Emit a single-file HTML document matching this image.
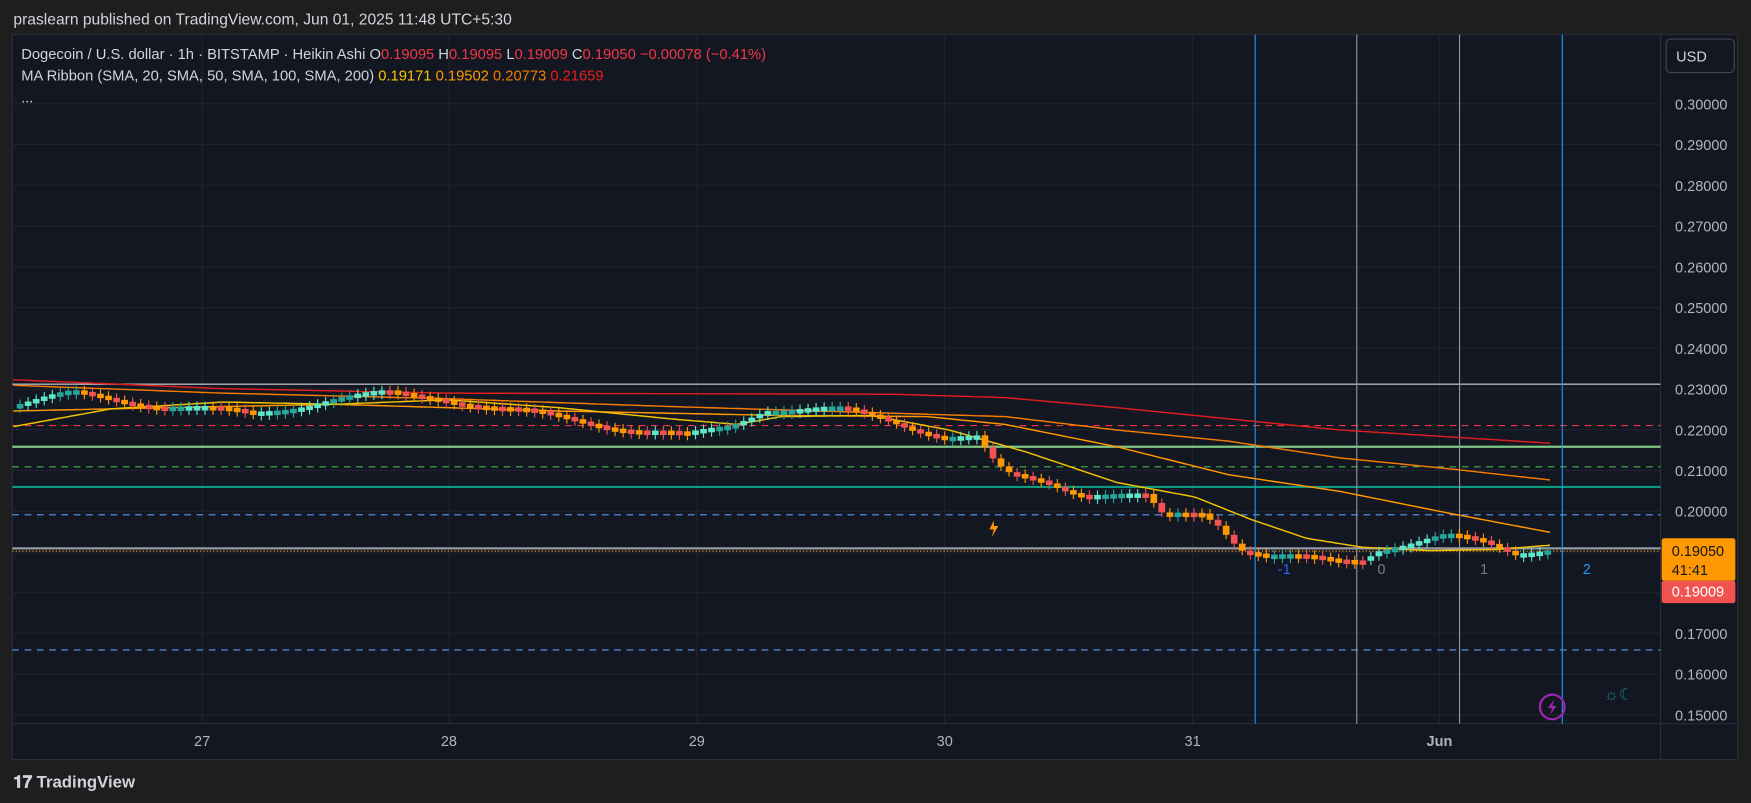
<!DOCTYPE html>
<html><head><meta charset="utf-8"><style>
html,body{margin:0;padding:0;background:#1e1e1e;width:1751px;height:803px;overflow:hidden}
svg{display:block}
text{font-family:"Liberation Sans","DejaVu Sans",sans-serif}
</style></head><body>
<svg id="s" width="1751" height="803" viewBox="0 0 1568 719" preserveAspectRatio="none" xmlns="http://www.w3.org/2000/svg">
<rect width="1568" height="719" fill="#1e1e1e"/>
<text x="12" y="22" fill="#d1d4dc" font-size="14">praslearn published on TradingView.com, Jun 01, 2025 11:48 UTC+5:30</text>
<rect x="11" y="31" width="1545" height="649" fill="#131722" stroke="#2a2e39"/>
<g id="grid" stroke="#1f2430" stroke-width="1"></g>
<line x1="1487" y1="31" x2="1487" y2="680" stroke="#2a2e39"/>
<line x1="11" y1="648" x2="1556" y2="648" stroke="#2a2e39"/>
<g id="hl"></g>
<g id="ma" fill="none" stroke-width="1.3"></g>
<g id="cd"></g>
<g id="ax" fill="#b2b5be" font-size="13"></g>
<text x="19" y="53" font-size="13.2" fill="#d1d4dc">Dogecoin / U.S. dollar · 1h · BITSTAMP · Heikin Ashi  O<tspan fill="#f23645">0.19095</tspan>  H<tspan fill="#f23645">0.19095</tspan>  L<tspan fill="#f23645">0.19009</tspan>  C<tspan fill="#f23645">0.19050  −0.00078 (−0.41%)</tspan></text>
<text x="19" y="72" font-size="13.2" fill="#d1d4dc">MA Ribbon (SMA, 20, SMA, 50, SMA, 100, SMA, 200)  <tspan fill="#f5c400">0.19171</tspan>  <tspan fill="#ff9800">0.19502</tspan>  <tspan fill="#f57c00">0.20773</tspan>  <tspan fill="#e91e1e">0.21659</tspan></text>
<text x="19" y="92" font-size="13" fill="#d1d4dc">...</text>
<rect x="1492" y="35" width="61" height="30" rx="4" fill="#131722" stroke="#434651"/>
<text x="1501" y="55" font-size="13" fill="#d1d4dc">USD</text>
<rect x="1488" y="482" width="66" height="38" rx="2" fill="#ff9800"/>
<text x="1497" y="498" font-size="13" fill="#131722">0.19050</text>
<text x="1497" y="515" font-size="13" fill="#131722">41:41</text>
<rect x="1488" y="520" width="66" height="20" rx="2" fill="#f05350"/>
<text x="1497" y="534" font-size="13" fill="#fff">0.19009</text>
<circle cx="1390" cy="633" r="11" fill="none" stroke="#9c27b0" stroke-width="2"/>
<path d="M1392 626 L1386 634 L1390 634 L1388 640 L1394 632 L1390 632 Z" fill="#9c27b0"/>
<text x="1436" y="627" font-size="15" fill="#1e7a80">☼☾</text>
<path d="M890 466 L886 474 L890 474 L888 481 L894 471 L890 471 Z" fill="#ff9800"/>
<text x="12" y="705" font-size="15" font-weight="bold" fill="#d1d4dc">𝟏𝟕 TradingView</text>
</svg>
<script>
const NS="http://www.w3.org/2000/svg";
function el(p,t,a){const e=document.createElementNS(NS,t);for(const k in a)e.setAttribute(k,a[k]);document.getElementById(p).appendChild(e);return e;}
const Y=p=>93+(0.30-p)*3647;
for(let p=0.15;p<=0.3001;p+=0.01) el('grid','line',{x1:11,x2:1487,y1:Y(p),y2:Y(p)});
[181,402,624,846,1068,1289].forEach(x=>el('grid','line',{x1:x,x2:x,y1:31,y2:648}));
for(let p=0.15;p<=0.3001;p+=0.01){const y=Y(p); if(Math.abs(y-492)<20||Math.abs(y-530)<14) continue; const t=el('ax','text',{x:1500,y:y+5});t.textContent=p.toFixed(5);}
[[181,'27'],[402,'28'],[624,'29'],[846,'30'],[1068,'31'],[1289,'Jun']].forEach(([x,s])=>{const t=el('ax','text',{x:x,y:668,'text-anchor':'middle','font-weight':s=='Jun'?'bold':'normal'});t.textContent=s;});
el('hl','line',{x1:11,x2:1487,y1:344,y2:344,stroke:'#b2b5be','stroke-width':1.3});
el('hl','line',{x1:11,x2:1487,y1:381,y2:381,stroke:'#f23645','stroke-dasharray':'6 5'});
el('hl','line',{x1:11,x2:1487,y1:400,y2:400,stroke:'#81c784','stroke-width':2});
el('hl','line',{x1:11,x2:1487,y1:418,y2:418,stroke:'#4caf50','stroke-dasharray':'6 5'});
el('hl','line',{x1:11,x2:1487,y1:436,y2:436,stroke:'#089981','stroke-width':2});
el('hl','line',{x1:11,x2:1487,y1:461,y2:461,stroke:'#5b9cf6','stroke-dasharray':'6 5'});
el('hl','line',{x1:11,x2:1487,y1:582,y2:582,stroke:'#5b9cf6','stroke-dasharray':'6 5'});
el('hl','line',{x1:11,x2:1487,y1:491,y2:491,stroke:'#9598a1','stroke-width':2});
el('hl','line',{x1:11,x2:1487,y1:493.5,y2:493.5,stroke:'#ff9800','stroke-dasharray':'1 2'});
[[1124,'#2196f3'],[1215,'#9598a1'],[1307,'#9598a1'],[1399,'#2196f3']].forEach(([x,c])=>el('hl','line',{x1:x,x2:x,y1:31,y2:648,stroke:c}));
[[1150,'-1','#2962ff'],[1237,'0','#787b86'],[1329,'1','#787b86'],[1421,'2','#2196f3']].forEach(([x,s,c])=>{const t=el('hl','text',{x:x,y:514,fill:c,'font-size':13,'text-anchor':'middle'});t.textContent=s;});
function interp(pts,x){for(let i=0;i<pts.length-1;i++){if(x<=pts[i+1][0]){const [a,b]=pts[i],[c,d]=pts[i+1];return b+(d-b)*(x-a)/(c-a);}}return pts[pts.length-1][1];}
function pl(pts,c){let d='';for(let x=12;x<=1390;x+=4)d+=(d?'L':'M')+x+' '+interp(pts,x).toFixed(1);el('ma','path',{d:d,stroke:c});}
pl([[12,340],[200,348],[400,352],[800,353],[900,356],[1000,365],[1100,375],[1200,385],[1390,397]],'#e01e1e');
pl([[12,345],[200,352],[400,357],[600,364],[800,370],[900,373],[1000,385],[1100,395],[1200,410],[1300,420],[1390,430]],'#f57c00');
pl([[12,368],[150,365],[300,362],[500,368],[700,372],[830,373],[900,380],[1000,400],[1100,425],[1200,440],[1300,460],[1390,477]],'#ff9800');
pl([[12,382],[100,366],[200,360],[300,362],[400,358],[500,365],[600,375],[660,380],[700,373],[780,372],[850,385],[920,405],[1000,432],[1070,445],[1120,465],[1170,482],[1220,490],[1280,493],[1340,492],[1390,488]],'#f5c400');
const path=[[15,362],[70,352],[150,362],[230,370],[300,357],[350,352],[400,355],[450,365],[520,375],[580,385],[620,390],[660,380],[690,365],[760,367],[800,375],[850,390],[880,392],[890,410],[905,425],[940,430],[970,440],[1030,445],[1045,462],[1080,458],[1095,468],[1115,490],[1140,497],[1200,502],[1225,500],[1240,490],[1300,480],[1330,485],[1360,494],[1390,490]];
let prev=interp(path,15);
for(let x=15;x<=1386;x+=7.2){const c=interp(path,x+7.2)+(Math.sin(x*1.7)*3);const up=c<prev;const col=up?(Math.sin(x)>0.3?'#26a69a':'#5ee6c8'):(Math.sin(x*3)>0.2?'#f05350':'#ff9800');
const top=Math.min(c,prev),h=Math.max(4,Math.abs(c-prev));
el('cd','line',{x1:x+3,x2:x+3,y1:top-4,y2:top+h+4,stroke:col});
el('cd','rect',{x:x,y:top,width:6,height:h,fill:col});prev=c;}
</script>
</body></html>
